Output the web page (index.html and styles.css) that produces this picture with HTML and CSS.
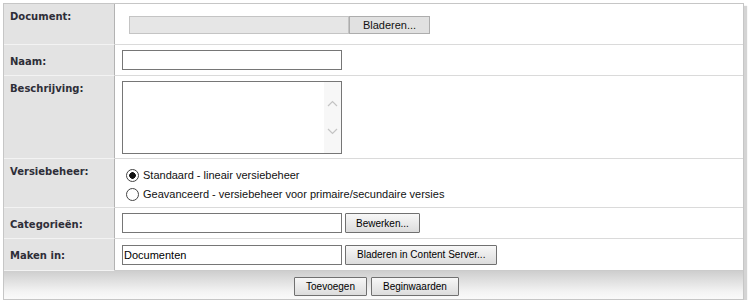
FILE: index.html
```html
<!DOCTYPE html>
<html lang="nl">
<head>
  <meta charset="UTF-8" />
  <title>Document toevoegen</title>
  <link rel="stylesheet" href="styles.css">
</head>
<body>
  <div class="panel">
    <div class="form">
      <div class="label">Document:</div>
      <div class="field field-doc">
        <div class="file">
          <span class="file-name"></span>
          <button class="file-btn" type="button">Bladeren...</button>
        </div>
      </div>

      <div class="label mid">Naam:</div>
      <div class="field">
        <input class="text" type="text" />
      </div>

      <div class="label">Beschrijving:</div>
      <div class="field field-top">
        <div class="textbox">
          <textarea></textarea>
          <div class="scroll">
            <svg width="11" height="7" viewBox="0 0 11 7"><path d="M1 6 L5.5 1.5 L10 6" fill="none" stroke="#c4c4c4" stroke-width="1.2"/></svg>
            <svg width="11" height="7" viewBox="0 0 11 7"><path d="M1 1 L5.5 5.5 L10 1" fill="none" stroke="#c4c4c4" stroke-width="1.2"/></svg>
          </div>
        </div>
      </div>

      <div class="label">Versiebeheer:</div>
      <div class="field field-radios">
        <label class="option"><input type="radio" name="versie" checked /> Standaard - lineair versiebeheer</label>
        <label class="option"><input type="radio" name="versie" /> Geavanceerd - versiebeheer voor primaire/secundaire versies</label>
      </div>

      <div class="label mid">Categorieën:</div>
      <div class="field">
        <input class="text" type="text" />
        <button class="btn" type="button">Bewerken...</button>
      </div>

      <div class="label mid">Maken in:</div>
      <div class="field field-last">
        <input class="text" type="text" value="Documenten" />
        <button class="btn btn-wide" type="button">Bladeren in Content Server...</button>
      </div>
    </div>
    <div class="actions">
      <button class="btn" type="button">Toevoegen</button>
      <button class="btn" type="button">Beginwaarden</button>
    </div>
  </div>
</body>
</html>
```

FILE: styles.css
```css
* { box-sizing: border-box; }
body {
  margin: 0;
  background: #fff;
  font-family: "Liberation Sans", Arial, sans-serif;
  font-size: 11px;
  color: #111;
}
.panel {
  margin: 3px 0 0 3px;
  width: 741px;
  border: 1px solid #c6c6c6;
  background: #fff;
  box-shadow: 3px 3px 1px #d4d4d4;
}
.form {
  display: grid;
  grid-template-columns: 111px 1fr;
  grid-template-rows: 41px 31px 83px 49px 31px 32px;
}
.label {
  background: #e3e3e3;
  border-right: 1px solid #b3b3b3;
  border-bottom: 1px solid #f3f3f3;
  padding: 7px 0 0 6px;
  font-family: "DejaVu Sans", Verdana, sans-serif;
  font-weight: bold;
  font-size: 10px;
  color: #2e2e38;
}
.label.mid {
  display: flex;
  align-items: center;
  padding-top: 2px;
}
.field {
  display: flex;
  align-items: center;
  gap: 3px;
  padding-left: 7px;
  border-bottom: 1px solid #dadada;
}
.field-doc {
  padding-top: 2px;
}
.field-top {
  align-items: flex-start;
  padding-top: 5px;
}
.field-last {
  border-bottom-color: #cbcbcb;
}
.file {
  display: flex;
  margin-left: 7px;
}
.file-name {
  width: 220px;
  height: 18px;
  background: #e6e6e6;
  border: 1px solid #c4c4c4;
}
.file-btn {
  width: 81px;
  height: 18px;
  margin: 0;
  padding: 0;
  background: #e1e1e1;
  border: 1px solid #adadad;
  font-family: "Liberation Sans", Arial, sans-serif;
  font-size: 11px;
  color: #111;
}
.text {
  width: 220px;
  height: 20px;
  margin: 0;
  padding: 0 1px;
  border: 1px solid #767676;
  font-family: "Liberation Sans", Arial, sans-serif;
  font-size: 11px;
  color: #000;
}
.textbox {
  display: flex;
  width: 220px;
  height: 73px;
  border: 1px solid #767676;
}
.textbox textarea {
  flex: 1;
  border: none;
  resize: none;
  outline: none;
  margin: 0;
}
.scroll {
  width: 17px;
  background: #f7f7f7;
  display: flex;
  flex-direction: column;
  align-items: center;
  justify-content: center;
  gap: 21px;
}
.field-radios {
  flex-direction: column;
  align-items: flex-start;
  justify-content: center;
  gap: 0;
  padding-top: 3px;
}
.option {
  display: flex;
  align-items: center;
  gap: 4px;
  height: 19px;
  margin-left: 4px;
  font-size: 11px;
  color: #111;
}
.option input {
  appearance: none;
  width: 13px;
  height: 13px;
  margin: 0;
  border: 1px solid #444;
  border-radius: 50%;
  background: #fff;
}
.option input:checked {
  background: radial-gradient(circle, #111 0 3px, #fff 3.6px);
}
.btn {
  height: 20px;
  margin: 0;
  padding: 0 10px;
  border: 1px solid #707070;
  border-radius: 1px;
  background: linear-gradient(#f7f7f7, #dcdcdc);
  font-family: "Liberation Sans", Arial, sans-serif;
  font-size: 10px;
  color: #000;
}
.btn-wide {
  padding: 0 11px;
}
.actions {
  height: 28px;
  display: flex;
  justify-content: center;
  align-items: center;
  gap: 4px;
  padding: 2px 0 0 6px;
  background: linear-gradient(#cecece, #f4f4f4 75%, #fafafa);
}
.actions .btn {
  height: 19px;
  padding: 0 11px;
}
```
